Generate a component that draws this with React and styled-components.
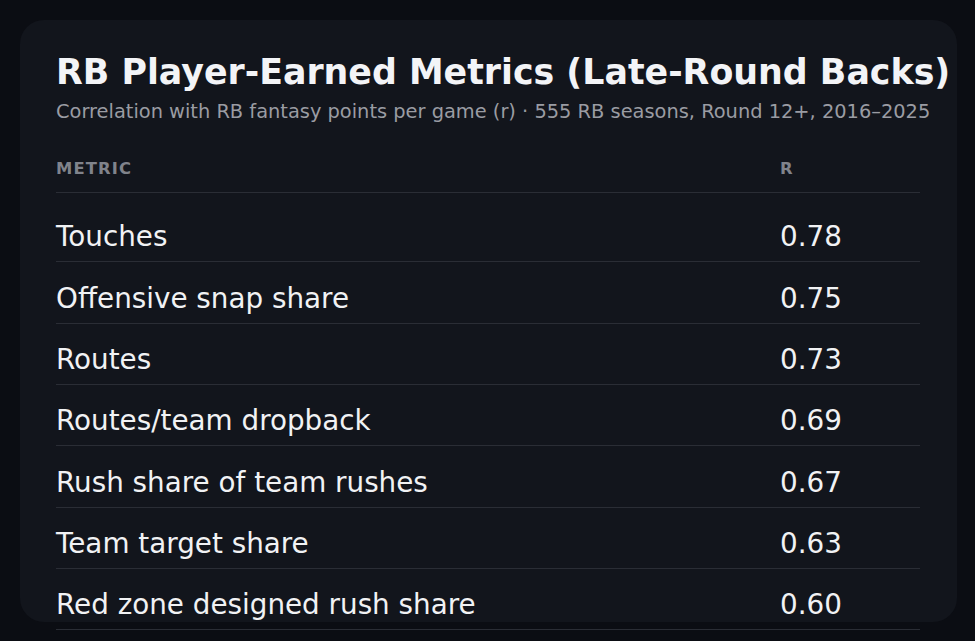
import React from 'react'
import styled, { createGlobalStyle } from 'styled-components'

const rows = [
    ['Touches', '0.78'],
    ['Offensive snap share', '0.75'],
    ['Routes', '0.73'],
    ['Routes/team dropback', '0.69'],
    ['Rush share of team rushes', '0.67'],
    ['Team target share', '0.63'],
    ['Red zone designed rush share', '0.60'],
]

const MetricsCard = () => {
    return (<>
        <GlobalStyle />
        <Card>
            <Title>RB Player-Earned Metrics (Late-Round Backs)</Title>
            <Subtitle>Correlation with RB fantasy points per game (r) · 555 RB seasons, Round 12+, 2016–2025</Subtitle>
            <Table>
                <thead>
                    <tr>
                        <Th>Metric</Th>
                        <Th $narrow>R</Th>
                    </tr>
                </thead>
                <tbody>
                    {rows.map(([name, r], i) => (
                        <tr key={name}>
                            <Td $first={i === 0}>{name}</Td>
                            <Td $first={i === 0}>{r}</Td>
                        </tr>
                    ))}
                </tbody>
            </Table>
        </Card>
    </>)
}

export default MetricsCard

const GlobalStyle = createGlobalStyle`
    html, body {
        margin: 0;
        background: #0b0d13;
        font-family: "DejaVu Sans", "Liberation Sans", sans-serif;
    }
`

const Card = styled.div`
    box-sizing: border-box;
    margin: 20px;
    width: 937px;
    height: 602px;
    padding: 31.5px 36px 0;
    background: #12151c;
    border-radius: 24px;
`

const Title = styled.h1`
    margin: 0;
    font-size: 34.8px;
    line-height: 40px;
    font-weight: 700;
    color: #f3f4f7;
    white-space: nowrap;
`

const Subtitle = styled.p`
    margin: 8.3px 0 0;
    font-size: 19.4px;
    line-height: 24px;
    color: #9a9ca3;
    white-space: nowrap;
`

const Table = styled.table`
    width: 864px;
    margin-top: 23px;
    border-collapse: collapse;
`

const Th = styled.th`
    width: ${p => p.$narrow ? '140px' : 'auto'};
    padding: 12px 0 13.7px;
    text-align: left;
    font-size: 16.4px;
    line-height: 20px;
    font-weight: 700;
    letter-spacing: 1.1px;
    text-transform: uppercase;
    color: #80838b;
    border-bottom: 1px solid #2a2d35;
`

const Td = styled.td`
    padding: ${p => p.$first ? '27px' : '19.33px'} 0 8px;
    font-size: 27.8px;
    line-height: 33px;
    color: #f1f2f4;
    border-bottom: 1px solid #2a2d35;
`
